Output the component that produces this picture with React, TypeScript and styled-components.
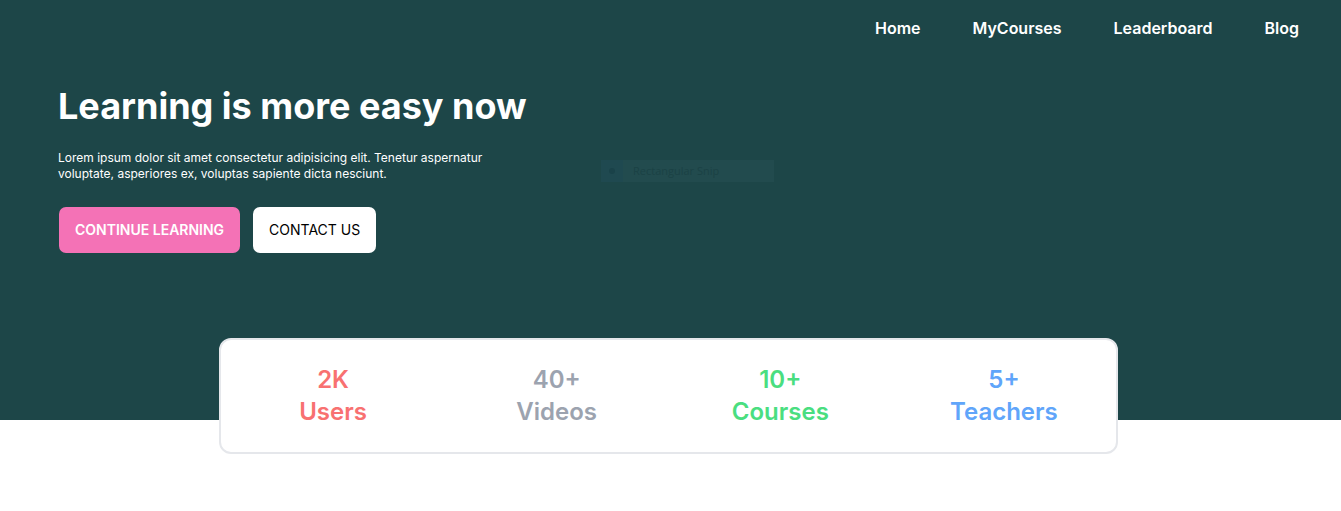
import React from 'react';
import styled, { createGlobalStyle } from 'styled-components';

const GlobalStyle = createGlobalStyle`
  *, *::before, *::after { box-sizing: border-box; }
  body { margin: 0; background: #fff; font-family: Inter, "Liberation Sans", sans-serif; }
  h1, p, ul { margin: 0; padding: 0; }
`;

const Hero = styled.header`
  position: relative;
  min-height: 420px;
  background: #1d4648;
  color: #fff;
`;

const Nav = styled.nav`
  display: flex;
  justify-content: flex-end;
  gap: 52px;
  padding: 16px 42px;
`;

const NavLink = styled.a`
  color: #fff;
  font-size: 16px;
  font-weight: 600;
  line-height: 24px;
  text-decoration: none;
`;

const Intro = styled.section`
  padding: 26px 58px 84px;
`;

const Title = styled.h1`
  font-size: 36px;
  font-weight: 700;
  line-height: 48px;
`;

const Lead = styled.p`
  max-width: 448px;
  margin-top: 20px;
  font-size: 12px;
  font-weight: 400;
  line-height: 16px;
`;

const Actions = styled.div`
  display: flex;
  gap: 13px;
  margin: 25px 1px 0;
`;

const Button = styled.button<{ $primary?: boolean }>`
  padding: 13px 16px;
  border: 0;
  border-radius: 7px;
  background: ${(p) => (p.$primary ? '#f472b6' : '#fff')};
  color: ${(p) => (p.$primary ? '#fff' : '#000')};
  font-family: inherit;
  font-size: 14px;
  font-weight: ${(p) => (p.$primary ? 600 : 400)};
  line-height: 20px;
  text-transform: uppercase;
`;

const SnipLabel = styled.div`
  position: absolute;
  top: 160px;
  left: 601px;
  display: flex;
  gap: 10px;
  width: 173px;
  background: #224b4e;
  color: #1b4245;
  font-family: "Open Sans", "Noto Sans", sans-serif;
  font-size: 11px;
  line-height: 22px;
`;

const SnipMark = styled.span`
  display: grid;
  place-items: center;
  width: 22px;
  height: 22px;
  background: #1f4950;

  &::before {
    content: '';
    width: 6px;
    height: 6px;
    border-radius: 50%;
    background: #1a4249;
  }
`;

const StatsBand = styled.section`
  position: relative;
  display: flex;
  justify-content: center;
  margin-top: -82px;
  padding-right: 4px;
`;

const Stats = styled.ul`
  display: grid;
  grid-template-columns: repeat(4, 1fr);
  width: 67.2%;
  padding: 24px 0;
  border: 2px solid #e5e7eb;
  border-radius: 12px;
  background: #fff;
  list-style: none;
`;

const Stat = styled.li<{ $color: string }>`
  display: flex;
  flex-direction: column;
  color: ${(p) => p.$color};
  font-size: 24px;
  font-weight: 600;
  line-height: 32px;
  text-align: center;
`;

const links = ['Home', 'MyCourses', 'Leaderboard', 'Blog'];

const stats = [
  { value: '2K', label: 'Users', color: '#f87171' },
  { value: '40+', label: 'Videos', color: '#9ca3af' },
  { value: '10+', label: 'Courses', color: '#4ade80' },
  { value: '5+', label: 'Teachers', color: '#60a5fa' },
];

export default function App() {
  return (
    <>
      <GlobalStyle />
      <Hero>
        <Nav>
          {links.map((l) => (
            <NavLink key={l} href="#">{l}</NavLink>
          ))}
        </Nav>
        <Intro>
          <Title>Learning is more easy now</Title>
          <Lead>
            Lorem ipsum dolor sit amet consectetur adipisicing elit. Tenetur aspernatur
            voluptate, asperiores ex, voluptas sapiente dicta nesciunt.
          </Lead>
          <Actions>
            <Button $primary>Continue learning</Button>
            <Button>Contact us</Button>
          </Actions>
        </Intro>
        <SnipLabel><SnipMark /><span>Rectangular Snip</span></SnipLabel>
      </Hero>
      <StatsBand>
        <Stats>
          {stats.map((s) => (
            <Stat key={s.label} $color={s.color}>
              <span>{s.value}</span>
              <span>{s.label}</span>
            </Stat>
          ))}
        </Stats>
      </StatsBand>
    </>
  );
}
